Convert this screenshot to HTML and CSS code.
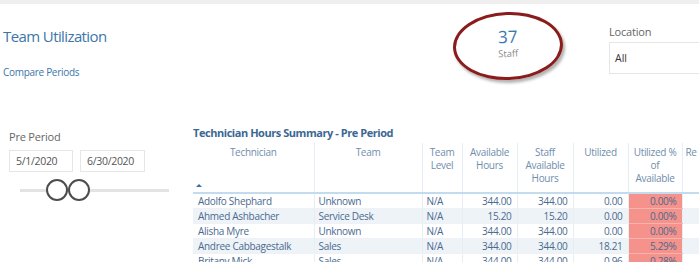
FILE: index.html
```html
<!DOCTYPE html>
<html lang="en">
<head>
  <meta charset="UTF-8">
  <title>Team Utilization</title>
  <link rel="stylesheet" href="styles.css">
</head>
<body>
  <div class="topbar"></div>

  <div class="header">
    <div class="titles">
      <h1>Team Utilization</h1>
      <p class="subtitle">Compare Periods</p>
    </div>
    <div class="kpi">
      <div class="kpi-value">37</div>
      <div class="kpi-label">Staff</div>
    </div>
    <div class="location">
      <div class="filter-label">Location</div>
      <div class="dropdown">All</div>
    </div>
  </div>

  <div class="main">
    <div class="filters">
      <div class="filter-label">Pre Period</div>
      <div class="dates">
        <div class="date-box">5/1/2020</div>
        <div class="date-box wide">6/30/2020</div>
      </div>
      <div class="slider">
        <span class="thumb first"></span>
        <span class="thumb"></span>
      </div>
    </div>

    <div class="report">
      <h2>Technician Hours Summary - Pre Period</h2>
      <table class="grid">
        <colgroup>
          <col style="width:121px"><col style="width:108px"><col style="width:40px">
          <col style="width:55px"><col style="width:56px"><col style="width:55px">
          <col style="width:54px"><col style="width:70px">
        </colgroup>
        <thead>
          <tr>
            <th><div class="th-inner">Technician<span class="sort"></span></div></th>
            <th>Team</th>
            <th>Team<br>Level</th>
            <th>Available<br>Hours</th>
            <th>Staff<br>Available<br>Hours</th>
            <th>Utilized</th>
            <th>Utilized %<br>of<br>Available</th>
            <th class="cut">Re</th>
          </tr>
        </thead>
        <tbody>
          <tr><td>Adolfo Shephard</td><td>Unknown</td><td>N/A</td><td class="num">344.00</td><td class="num">344.00</td><td class="num">0.00</td><td class="num low">0.00%</td><td></td></tr>
          <tr><td>Ahmed Ashbacher</td><td>Service Desk</td><td>N/A</td><td class="num">15.20</td><td class="num">15.20</td><td class="num">0.00</td><td class="num low">0.00%</td><td></td></tr>
          <tr><td>Alisha Myre</td><td>Unknown</td><td>N/A</td><td class="num">344.00</td><td class="num">344.00</td><td class="num">0.00</td><td class="num low">0.00%</td><td></td></tr>
          <tr><td>Andree Cabbagestalk</td><td>Sales</td><td>N/A</td><td class="num">344.00</td><td class="num">344.00</td><td class="num">18.21</td><td class="num low">5.29%</td><td></td></tr>
          <tr><td>Britany Mick</td><td>Sales</td><td>N/A</td><td class="num">344.00</td><td class="num">344.00</td><td class="num">0.96</td><td class="num low">0.28%</td><td></td></tr>
        </tbody>
      </table>
    </div>
  </div>
</body>
</html>
```

FILE: styles.css
```css
body { margin: 0; width: 699px; height: 262px; overflow: hidden; background: #fff; font-family: "Open Sans", "Noto Sans", sans-serif; color: #555; }
.topbar { height: 4px; background: #efefef; }

.header { display: flex; height: 104px; }
.titles { width: 450px; flex-shrink: 0; padding: 22px 0 0 3px; box-sizing: border-box; }
.titles h1 { margin: 0; font-size: 15px; line-height: 20px; font-weight: normal; color: #3c76a9; letter-spacing: -0.6px; }
.subtitle { margin: 19px 0 0; font-size: 10px; line-height: 14px; color: #3c76a9; letter-spacing: -0.3px; }

.kpi { width: 110px; height: 68px; flex-shrink: 0; margin: 8px 0 0 3px; box-sizing: border-box; border: 3px solid #8a1c1c; border-radius: 50%; box-shadow: 2px 3px 3px rgba(0,0,0,0.3); transform: rotate(-2deg); text-align: center; padding-top: 12px; }
.kpi-value { font-size: 17px; line-height: 20px; color: #3a78b3; }
.kpi-label { font-size: 9.5px; line-height: 14px; color: #8c8c8c; }

.location { margin-left: 46px; padding-top: 21px; flex: 1; }
.filter-label { font-size: 11px; line-height: 14px; color: #666; letter-spacing: -0.2px; }
.dropdown { margin-top: 3px; height: 32px; border: 1px solid #e6e6e6; border-right: none; box-sizing: border-box; padding: 0 5px; font-size: 10.5px; line-height: 30px; color: #333; }

.main { display: flex; }
.filters { width: 193px; flex-shrink: 0; padding: 22px 0 0 9px; box-sizing: border-box; }
.dates { display: flex; gap: 7px; margin-top: 6px; }
.date-box { width: 64px; height: 22px; box-sizing: border-box; border: 1px solid #e6e6e6; padding-left: 6px; font-size: 10.5px; line-height: 20px; color: #555; letter-spacing: -0.3px; }
.date-box.wide { width: 65px; }
.slider { display: flex; width: 149px; height: 22px; margin: 7px 0 0 11px; background: linear-gradient(#e3e3e3, #e3e3e3) center / 100% 3px no-repeat; }
.thumb { width: 22px; height: 22px; box-sizing: border-box; border: 2px solid #4d4d4d; border-radius: 50%; background: #fff; }
.thumb.first { margin-left: 26px; }

.report { flex: 1; min-width: 0; padding-top: 17px; }
.report h2 { margin: 0 0 2px; font-size: 11px; line-height: 16px; font-weight: bold; color: #3a6893; letter-spacing: -0.45px; }

.grid { table-layout: fixed; width: 559px; border-collapse: collapse; font-size: 10px; letter-spacing: -0.3px; }
.grid th { height: 46px; padding: 3px 2px 0; vertical-align: top; font-weight: normal; line-height: 13px; color: #6f8dac; text-align: center; border-left: 1px solid #e6eef5; border-bottom: 2px solid #c3dbef; }
.grid th:first-child { border-left: none; padding: 0; }
.grid th.cut { text-align: left; padding-left: 3px; }
.th-inner { display: flex; flex-direction: column; align-items: center; justify-content: space-between; height: 46px; padding-top: 3px; box-sizing: border-box; }
.sort { align-self: flex-start; margin: 0 0 2px 3px; width: 0; height: 0; border-left: 3px solid transparent; border-right: 3px solid transparent; border-bottom: 3px solid #3b6fa0; }
.grid td { height: 14px; padding: 0 5px 0 4px; line-height: 14px; color: #4a6a8f; white-space: nowrap; overflow: hidden; border-left: 1px solid #e6eef5; border-bottom: 1px solid #eef2f6; }
.grid td:first-child { border-left: none; padding-left: 5px; }
.grid tbody tr:nth-child(even) td { background: #eef3f8; }
.grid td.num { text-align: right; }
.grid tbody tr td.low { background: #f4928b; border-bottom-color: #f7b4ae; }
```
